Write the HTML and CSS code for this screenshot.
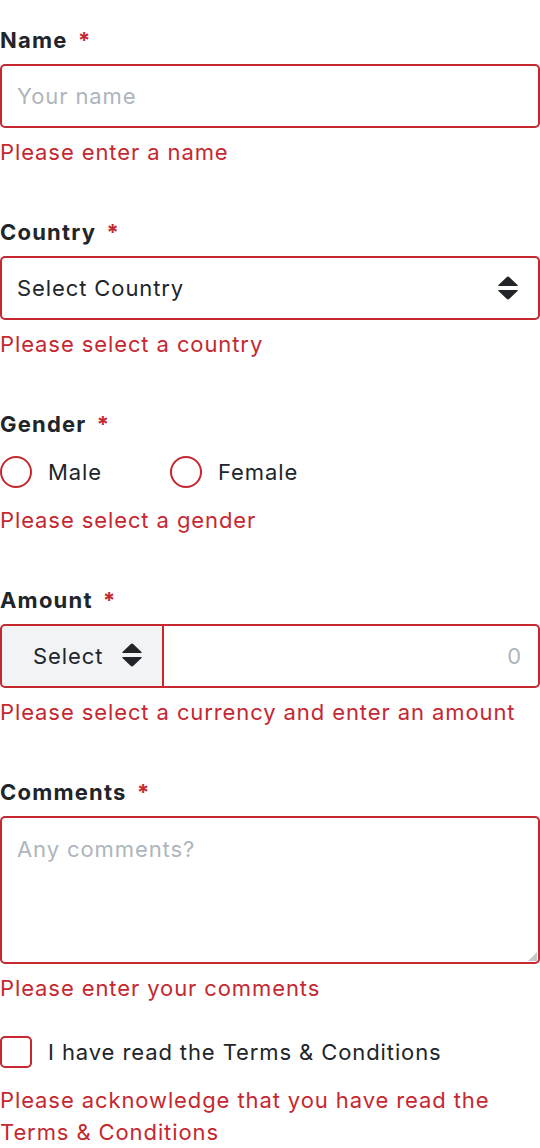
FILE: index.html
```html
<!DOCTYPE html>
<html lang="en">
<head>
<meta charset="utf-8">
<title>Form</title>
<link rel="stylesheet" href="styles.css">
</head>
<body>
<form class="form" novalidate>
  <div class="field">
    <label class="label" for="name">Name <span class="req">*</span></label>
    <input class="control" id="name" type="text" placeholder="Your name">
    <div class="error">Please enter a name</div>
  </div>

  <div class="field">
    <label class="label" for="country">Country <span class="req">*</span></label>
    <div class="select-wrap">
      <select class="control select" id="country">
        <option>Select Country</option>
      </select>
      <svg class="arrows" width="22" height="26" viewBox="0 0 22 26"><path d="M9.6 1.2 Q11 -0.2 12.4 1.2 L20.5 9 Q21.3 10 20 10 L2 10 Q0.7 10 1.5 9 Z M2 14 L20 14 Q21.3 14 20.5 15 L12.4 22.8 Q11 24.2 9.6 22.8 L1.5 15 Q0.7 14 2 14 Z" fill="#212529"/></svg>
    </div>
    <div class="error">Please select a country</div>
  </div>

  <div class="field">
    <div class="label">Gender <span class="req">*</span></div>
    <div class="options">
      <label class="option"><span class="radio"></span>Male</label>
      <label class="option"><span class="radio"></span>Female</label>
    </div>
    <div class="error">Please select a gender</div>
  </div>

  <div class="field">
    <label class="label" for="amount">Amount <span class="req">*</span></label>
    <div class="group">
      <div class="currency">
        <span>Select</span>
        <svg class="arrows-sm" width="22" height="26" viewBox="0 0 22 26"><path d="M9.6 1.2 Q11 -0.2 12.4 1.2 L20.5 9 Q21.3 10 20 10 L2 10 Q0.7 10 1.5 9 Z M2 14 L20 14 Q21.3 14 20.5 15 L12.4 22.8 Q11 24.2 9.6 22.8 L1.5 15 Q0.7 14 2 14 Z" fill="#212529"/></svg>
      </div>
      <input class="amount" id="amount" type="text" placeholder="0">
    </div>
    <div class="error">Please select a currency and enter an amount</div>
  </div>

  <div class="field">
    <label class="label" for="comments">Comments <span class="req">*</span></label>
    <div class="textarea-wrap">
      <textarea class="control textarea" id="comments" placeholder="Any comments?"></textarea>
      <span class="grip"></span>
    </div>
    <div class="error">Please enter your comments</div>
  </div>

  <div class="field check-field">
    <label class="option"><span class="checkbox"></span>I have read the Terms &amp; Conditions</label>
    <div class="error">Please acknowledge that you have read the Terms &amp; Conditions</div>
  </div>
</form>
</body>
</html>
```

FILE: styles.css
```css
* { box-sizing: border-box; }

html, body {
  margin: 0;
  padding: 0;
  background: #ffffff;
}

body {
  font-family: Inter, "Noto Sans", "Liberation Sans", sans-serif;
  font-size: 22px;
  line-height: 32px;
  letter-spacing: 0.9px;
  color: #212529;
}

.form {
  padding-top: 24px;
  display: flex;
  flex-direction: column;
  gap: 48px;
}

.field {
  display: flex;
  flex-direction: column;
  gap: 8px;
}

.label {
  font-weight: 700;
  line-height: 32px;
  letter-spacing: 1.2px;
}

.req {
  color: #c5282f;
  margin-left: 4px;
}

.control {
  display: block;
  width: 100%;
  height: 64px;
  margin: 0;
  border: 2px solid #c5282f;
  border-radius: 5px;
  padding: 0 15px;
  font: inherit;
  letter-spacing: inherit;
  color: #212529;
  background: #ffffff;
  outline: none;
}

.control::placeholder,
.amount::placeholder {
  color: #adb5bd;
  opacity: 1;
}

.select-wrap {
  position: relative;
}

.select {
  appearance: none;
  -webkit-appearance: none;
}

.arrows {
  position: absolute;
  right: 21px;
  top: 50%;
  margin-top: -12px;
  pointer-events: none;
}

.error {
  color: #c5282f;
  line-height: 32px;
}

.options {
  display: flex;
  align-items: center;
  height: 48px;
  gap: 68px;
}

.option {
  display: flex;
  align-items: center;
  gap: 16px;
  line-height: 32px;
}

.radio {
  width: 32px;
  height: 32px;
  border: 2px solid #c5282f;
  border-radius: 50%;
  flex: none;
}

.group {
  display: flex;
  height: 64px;
}

.currency {
  width: 164px;
  flex: none;
  display: flex;
  align-items: center;
  gap: 18px;
  padding-left: 31px;
  background: #f1f3f5;
  border: 2px solid #c5282f;
  border-radius: 5px 0 0 5px;
}

.arrows-sm {
  flex: none;
  margin-top: -1px;
}

.amount {
  flex: 1;
  min-width: 0;
  height: 64px;
  margin: 0;
  border: 2px solid #c5282f;
  border-left: none;
  border-radius: 0 5px 5px 0;
  padding: 0 16px;
  font: inherit;
  letter-spacing: inherit;
  text-align: right;
  outline: none;
  background: #ffffff;
}

.textarea-wrap {
  position: relative;
}

.textarea {
  height: 148px;
  padding: 15px;
  resize: none;
  display: block;
}

.grip {
  position: absolute;
  right: 3px;
  bottom: 3px;
  width: 0;
  height: 0;
  border-left: 9px solid transparent;
  border-bottom: 9px solid #c4c7cb;
}

.check-field {
  margin-top: -24px;
}

.check-field .option {
  height: 48px;
}

.checkbox {
  width: 32px;
  height: 32px;
  border: 2px solid #c5282f;
  border-radius: 5px;
  flex: none;
}
```
